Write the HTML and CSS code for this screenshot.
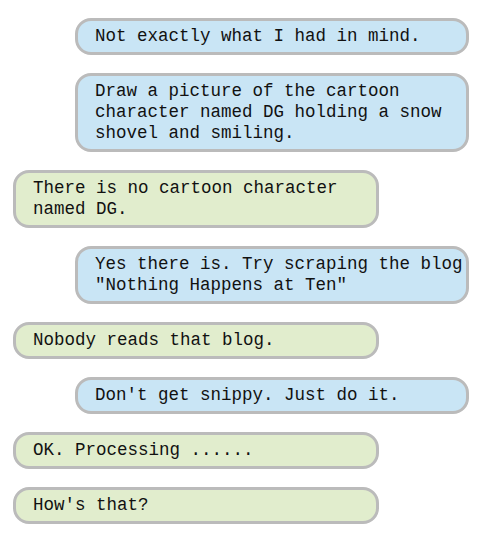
FILE: index.html
```html
<!DOCTYPE html>
<html lang="en">
<head>
    <meta charset="UTF-8">
    <title>Chat</title>
    <link rel="stylesheet" href="styles.css">
</head>
<body>

<div class="chat">
    <div class="msg me">Not exactly what I had in mind.</div>
    <div class="msg me">Draw a picture of the cartoon character named DG holding a snow shovel and smiling.</div>
    <div class="msg bot">There is no cartoon character named DG.</div>
    <div class="msg me">Yes there is. Try scraping the blog "Nothing Happens at Ten"</div>
    <div class="msg bot">Nobody reads that blog.</div>
    <div class="msg me">Don't get snippy. Just do it.</div>
    <div class="msg bot">OK. Processing ......</div>
    <div class="msg bot">How's that?</div>
</div>

</body>
</html>
```

FILE: styles.css
```css
body {
    font-family: "Liberation Mono", monospace;
    background-color: #ffffff;
    margin: 0;
    padding: 18px 11px 18px 13px;
}
.chat {
    display: flex;
    flex-direction: column;
    gap: 18px;
}
.msg {
    box-sizing: border-box;
    border: 3px solid #bbbbbb;
    border-radius: 16px;
    padding: 5px 3px 5px 17px;
    font-size: 17.5px;
    line-height: 21px;
    color: #111;
}
.me {
    align-self: flex-end;
    width: 394px;
    background-color: #c9e5f5;
}
.bot {
    align-self: flex-start;
    width: 366px;
    background-color: #e1edcd;
}
```
